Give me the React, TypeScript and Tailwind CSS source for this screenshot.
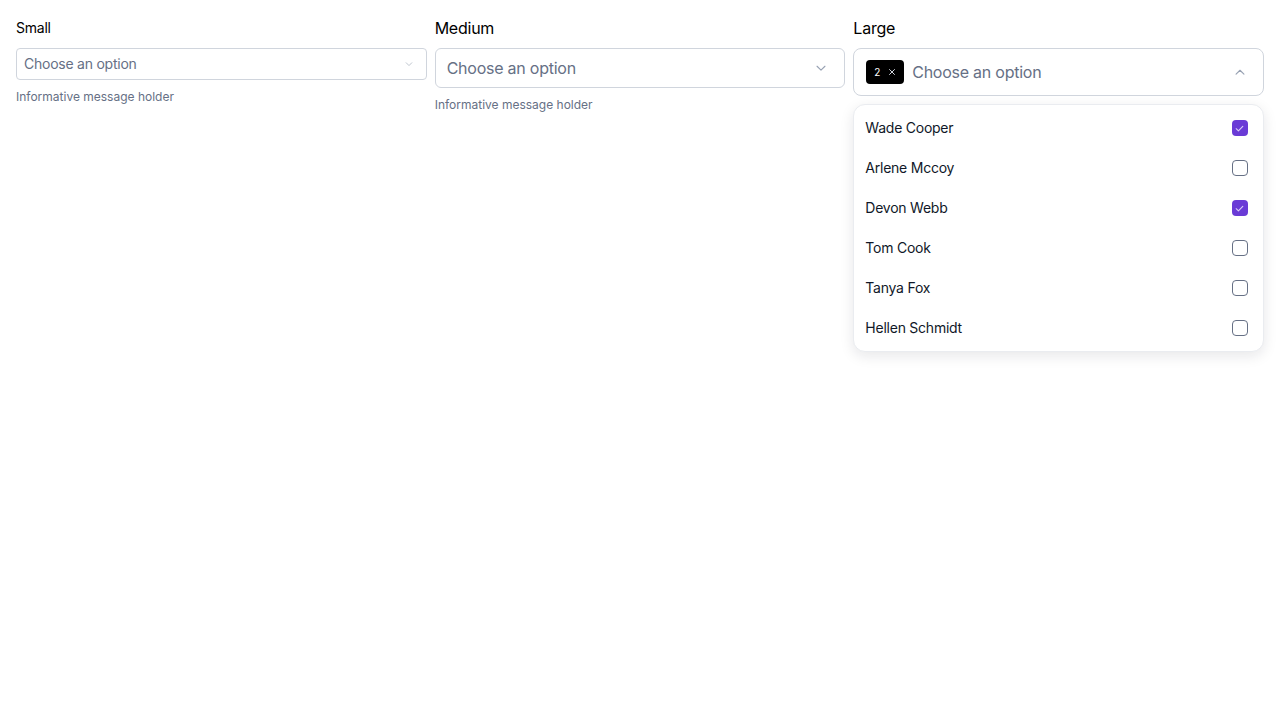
import React from "react";

const font = { fontFamily: "Inter, 'Noto Sans', sans-serif" };

function Chevron({ size, up = false, color = "#98a2b3" }: { size: number; up?: boolean; color?: string }) {
  return (
    <svg width={size} height={size} viewBox="0 0 16 16" fill="none">
      <path
        d={up ? "M3.5 10.5L8 6l4.5 4.5" : "M3.5 6L8 10.5 12.5 6"}
        stroke={color}
        strokeWidth={1.3}
        strokeLinecap="round"
        strokeLinejoin="round"
      />
    </svg>
  );
}

function Check({ checked }: { checked: boolean }) {
  return checked ? (
    <div className="w-4 h-4 rounded-[4px] bg-[#6a3bd6] flex items-center justify-center">
      <svg width="11" height="11" viewBox="0 0 10 10" fill="none">
        <path d="M2 5.2L4 7.2 8 3" stroke="#d9ccf7" strokeWidth="1" strokeLinecap="round" strokeLinejoin="round" />
      </svg>
    </div>
  ) : (
    <div className="w-4 h-4 rounded-[4px] border border-[#667085] bg-white" />
  );
}

const people = [
  { name: "Wade Cooper", checked: true },
  { name: "Arlene Mccoy", checked: false },
  { name: "Devon Webb", checked: true },
  { name: "Tom Cook", checked: false },
  { name: "Tanya Fox", checked: false },
  { name: "Hellen Schmidt", checked: false },
];

export default function App() {
  return (
    <div className="w-[1280px] h-[720px] bg-white p-4 tracking-[-0.015em]" style={font}>
      <div className="grid grid-cols-3 gap-2">
        {/* Small */}
        <div className="flex flex-col">
          <div className="text-sm leading-6 text-black mb-2">Small</div>
          <div className="h-8 border border-[#d0d5dd] rounded-[4px] flex items-center justify-between pl-[7px] pr-3">
            <span className="text-sm text-[#667085]">Choose an option</span>
            <Chevron size={10} color="#b0b7c3" />
          </div>
          <div className="mt-[9px] text-xs leading-4 tracking-normal text-[#667085]">Informative message holder</div>
        </div>
        {/* Medium */}
        <div className="flex flex-col">
          <div className="text-base leading-6 text-black mb-2">Medium</div>
          <div className="h-10 border border-[#d0d5dd] rounded-[6px] flex items-center justify-between pl-[11px] pr-4">
            <span className="text-base text-[#667085]">Choose an option</span>
            <Chevron size={14} />
          </div>
          <div className="mt-[9px] text-xs leading-4 tracking-normal text-[#667085]">Informative message holder</div>
        </div>
        {/* Large */}
        <div className="flex flex-col relative">
          <div className="text-base leading-6 text-black mb-2">Large</div>
          <div className="h-12 border border-[#d0d5dd] rounded-[8px] flex items-center justify-between pl-3 pr-4">
            <div className="flex items-center gap-2">
              <div className="h-6 px-2 rounded-[4px] bg-black flex items-center gap-2">
                <span className="text-[10px] text-white leading-none">2</span>
                <svg width="8" height="8" viewBox="0 0 8 8" fill="none">
                  <path d="M1.5 1.5l5 5M6.5 1.5l-5 5" stroke="#d0d5dd" strokeWidth="1" strokeLinecap="round" />
                </svg>
              </div>
              <span className="text-base text-[#667085]">Choose an option</span>
            </div>
            <Chevron size={14} up />
          </div>
          <div className="absolute left-0 right-0 top-[88px] bg-white border border-[#eaecf0] rounded-[12px] shadow-[0_4px_14px_rgba(16,24,40,0.10)] py-[3px]">
            {people.map((p) => (
              <div key={p.name} className="h-10 flex items-center justify-between pl-[11px] pr-[15px]">
                <span className="text-sm text-[#101828]">{p.name}</span>
                <Check checked={p.checked} />
              </div>
            ))}
          </div>
        </div>
      </div>
    </div>
  );
}
